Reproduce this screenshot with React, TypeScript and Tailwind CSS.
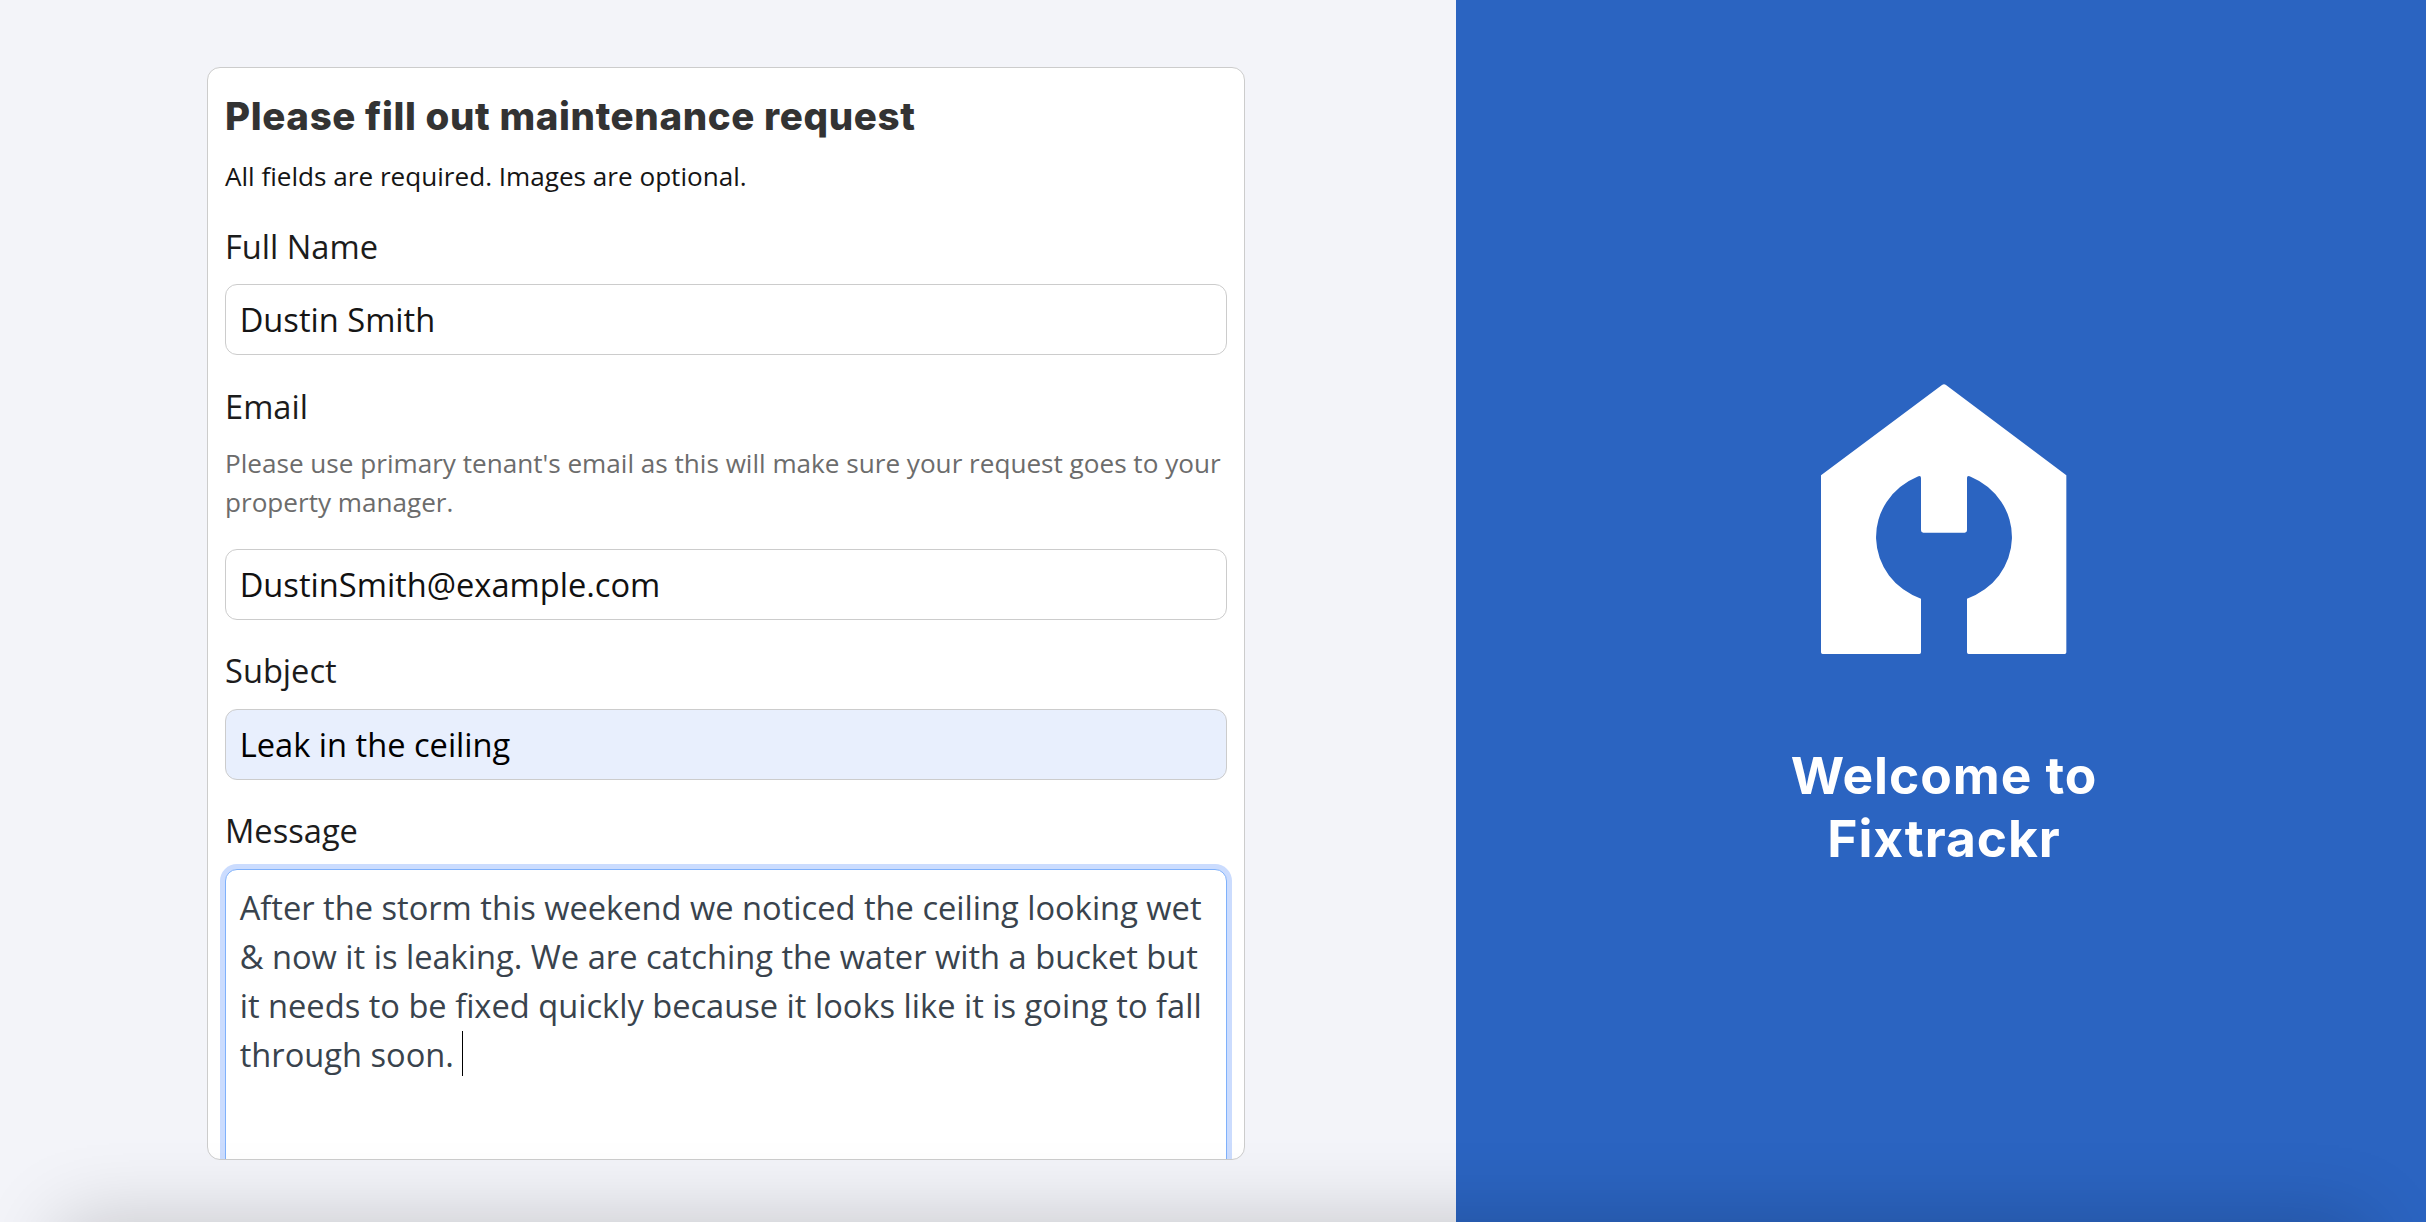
import type { ReactNode } from 'react';

const inputClass =
  'block h-[71px] w-full rounded-[12px] border border-[#cccccc] pr-[13px] pl-[13.7px] text-[32.64px] leading-[49px] outline-none';

function Field({ label, hint, children }: { label: string; hint?: string; children: ReactNode }) {
  return (
    <div className="flex flex-col">
      <label className="text-[32.64px] leading-[49px] text-[#1c1c1c]">{label}</label>
      {hint && <p className="mt-[13.3px] mb-[12.5px] text-[26.11px] leading-[39.25px] text-[#6c6c6c]">{hint}</p>}
      <div className="mt-[13.5px]">{children}</div>
    </div>
  );
}

function Logo() {
  return (
    <svg className="block h-[270px] w-[246px]" viewBox="122 72 738 810" fill="#fff">
      <path d="M485 75Q491 70 497 75L858 346V877Q858 882 853 882H565Q560 882 560 877V716A205 197 0 0 0 571 350Q560 345 560 354V511Q560 518 553 518H429Q422 518 422 511V354Q422 345 411 350A205 197 0 0 0 422 716V877Q422 882 417 882H127Q122 882 122 877V346Z" />
    </svg>
  );
}

export default function App() {
  return (
    <div className="relative flex h-[1222px] w-full overflow-hidden bg-[#f3f4f9] font-['Open_Sans','Noto_Sans',sans-serif]">
      <main className="w-[1455.5px] shrink-0 pt-[67px] pl-[207px]">
        <form className="flex h-[1093px] w-[1038px] flex-col overflow-hidden rounded-[13px] border border-[#cccccc] bg-white px-[17px] pt-[24.4px]">
          <h1 className="font-['Inter',sans-serif] text-[38.5px] leading-[48px] font-extrabold tracking-[0.62px] whitespace-nowrap text-[#333]">
            Please fill out maintenance request
          </h1>
          <p className="mt-[16.4px] text-[26.11px] leading-[39.25px] text-[#151515]">
            All fields are required. Images are optional.
          </p>
          <div className="mt-[25.9px] flex flex-col gap-[26.5px]">
            <Field label="Full Name">
              <input className={`${inputClass} bg-white text-[#151515]`} defaultValue="Dustin Smith" />
            </Field>
            <Field
              label="Email"
              hint="Please use primary tenant's email as this will make sure your request goes to your property manager."
            >
              <input className={`${inputClass} bg-white text-[#111]`} defaultValue="DustinSmith@example.com" />
            </Field>
            <Field label="Subject">
              <input className={`${inputClass} bg-[#e8effd] text-black`} defaultValue="Leak in the ceiling" />
            </Field>
            <Field label="Message">
              <div className="h-[340px] w-full rounded-[12px] border border-[#7fb1fb] bg-white pt-[13px] pr-[13px] pl-[13.7px] text-[32.64px] leading-[49px] text-[#39434d] shadow-[0_0_0_5px_#cbdcfe]">
                After the storm this weekend we noticed the ceiling looking wet &amp; now it is leaking. We are catching
                the water with a bucket but it needs to be fixed quickly because it looks like it is going to fall
                through soon.{' '}
                <span className="-my-2 inline-block h-[45px] w-px -translate-y-[4px] bg-black align-middle" />
              </div>
            </Field>
          </div>
        </form>
      </main>
      <aside className="flex grow flex-col items-center bg-[#2b64c1] pt-[383.5px] pl-[5.5px]">
        <Logo />
        <h2 className="mt-[90.5px] pl-px text-center font-['Inter',sans-serif] text-[51.5px] leading-[63.3px] font-bold tracking-[0.95px] text-white">
          Welcome to
          <br />
          Fixtrackr
        </h2>
      </aside>
      <div className="pointer-events-none absolute top-full right-[60px] left-[60px] h-[300px] shadow-[0_0_76px_rgba(0,0,0,0.2)]" />
    </div>
  );
}
